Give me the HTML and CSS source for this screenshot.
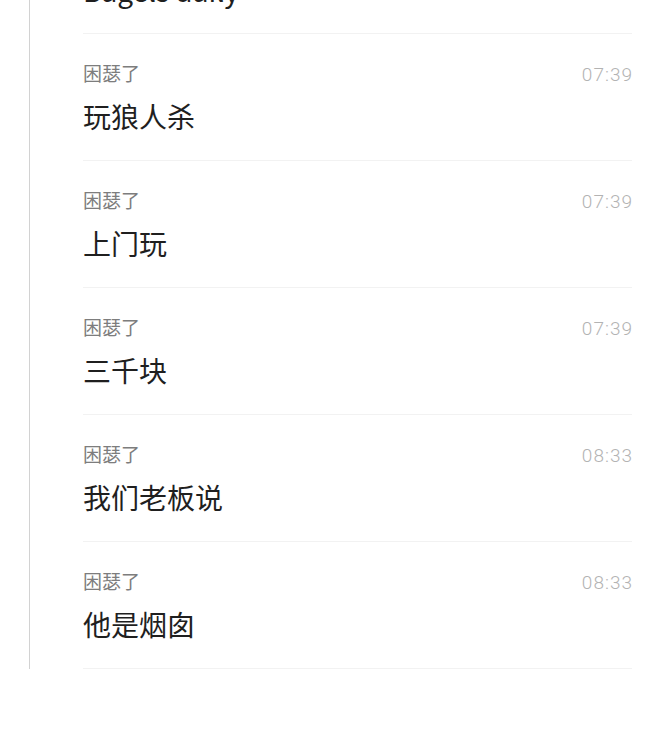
FILE: index.html
```html
<!DOCTYPE html>
<html lang="zh-CN">
<head>
  <meta charset="UTF-8">
  <title>聊天记录</title>
  <meta name="viewport" content="width=device-width, initial-scale=1">
  <link rel="stylesheet" href="styles.css">
</head>
<body>
<main class="thread">
  <ul class="msgs">
    <li class="msg msg--cut">
      <div class="msg-head">
        <span class="msg-name">困瑟了</span>
        <span class="msg-time">07:38</span>
      </div>
      <p class="msg-text">Bagels daily</p>
    </li>
    <li class="msg">
      <div class="msg-head">
        <span class="msg-name">困瑟了</span>
        <span class="msg-time">07:39</span>
      </div>
      <p class="msg-text">玩狼人杀</p>
    </li>
    <li class="msg">
      <div class="msg-head">
        <span class="msg-name">困瑟了</span>
        <span class="msg-time">07:39</span>
      </div>
      <p class="msg-text">上门玩</p>
    </li>
    <li class="msg">
      <div class="msg-head">
        <span class="msg-name">困瑟了</span>
        <span class="msg-time">07:39</span>
      </div>
      <p class="msg-text">三千块</p>
    </li>
    <li class="msg">
      <div class="msg-head">
        <span class="msg-name">困瑟了</span>
        <span class="msg-time">08:33</span>
      </div>
      <p class="msg-text">我们老板说</p>
    </li>
    <li class="msg">
      <div class="msg-head">
        <span class="msg-name">困瑟了</span>
        <span class="msg-time">08:33</span>
      </div>
      <p class="msg-text">他是烟囱</p>
    </li>
  </ul>
</main>
</body>
</html>
```

FILE: styles.css
```css
*, *::before, *::after {
  box-sizing: border-box;
}

body {
  margin: 0;
  background: #fff;
  font-family: "Noto Sans CJK SC", "Noto Sans", sans-serif;
  overflow: hidden;
}

.thread {
  margin-left: 29px;
  padding: 0 29px 0 53px;
  border-left: 1px solid #d2d2d2;
}

.msgs {
  list-style: none;
  margin: -93px 0 0;
  padding: 0;
}

.msg {
  height: 127px;
  padding-top: 26px;
  border-bottom: 1px solid #f2f2f2;
}

.msg-head {
  display: flex;
  justify-content: space-between;
  align-items: baseline;
  line-height: 26px;
}

.msg-name {
  font-size: 19px;
  color: #7d7d7d;
}

.msg-time {
  font-family: Roboto, "Noto Sans", sans-serif;
  font-weight: 300;
  font-size: 19px;
  letter-spacing: 1px;
  margin-right: -1px;
  color: #b3b3b3;
}

.msg-text {
  margin: 8px 0 0;
  font-size: 28px;
  line-height: 40px;
  color: #1f1f1f;
}

/* the row scrolled half out of view at the top */
.msg--cut {
  padding-top: 27px;
}
```
